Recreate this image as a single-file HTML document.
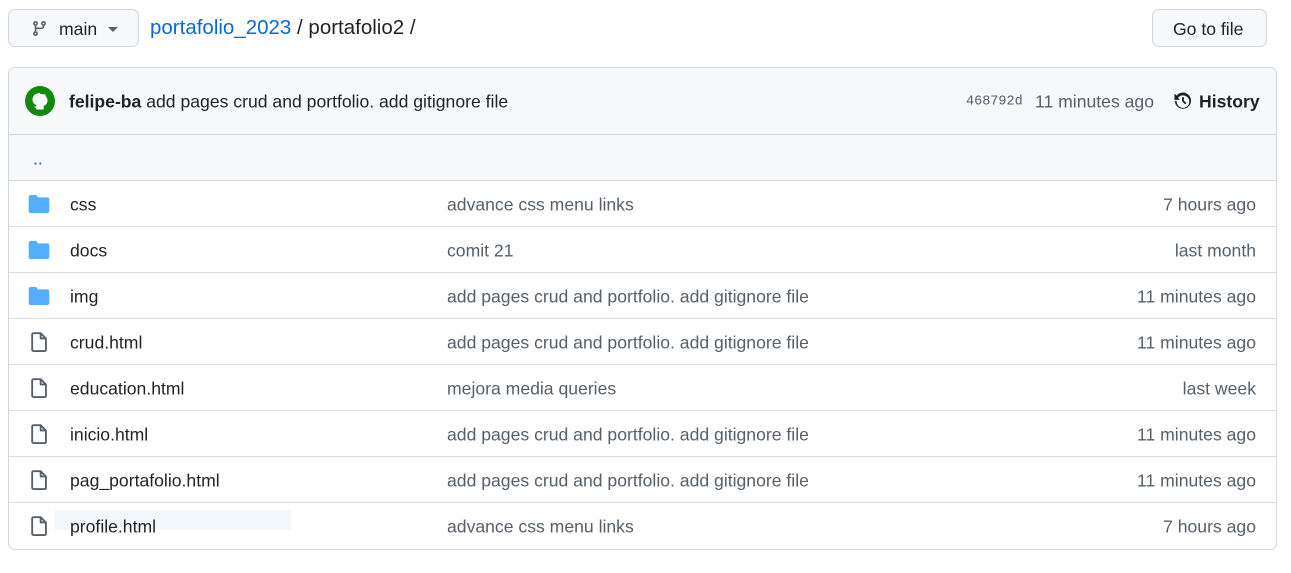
<!DOCTYPE html>
<html><head><meta charset="utf-8"><style>
*{box-sizing:border-box;margin:0;padding:0}
body{width:1291px;height:573px;background:#fff;font-family:"Liberation Sans",sans-serif;color:#1f2328;font-size:17.6px;position:relative;overflow:hidden}
.btn{position:absolute;background:#f6f8fa;border:1px solid #d0d7de;border-radius:7px}
.box{position:absolute;left:8px;top:67px;width:1269px;height:483px;border:1px solid #d0d7de;border-radius:7px;overflow:hidden}
.hdr{height:67px;background:#f6f8fa;border-bottom:1px solid #d0d7de;position:relative}
.up{height:46px;background:#f6f8fa;border-bottom:1px solid #d0d7de;position:relative;color:#0969da}
.row{height:46px;border-bottom:1px solid #d8dee4;position:relative}
.row:last-child{border-bottom:none}
.ab{position:absolute;top:50%;transform:translateY(-45%);white-space:nowrap}
.msg{left:438px;color:#57606a}
.tm{right:20px;color:#57606a}
.nm{left:61px}
.ic{left:19px;transform:translateY(-50%)}
</style></head><body>
<div class="btn" style="left:8px;top:9px;width:131px;height:38px">
<svg style="position:absolute;left:22px;top:10px" width="17" height="17" viewBox="0 0 16 16" fill="#57606a"><path d="M9.5 3.25a2.25 2.25 0 1 1 3 2.12V6A2.5 2.5 0 0 1 10 8.5H6a1 1 0 0 0-1 1v1.13a2.25 2.25 0 1 1-1.5 0V5.37a2.25 2.25 0 1 1 1.5 0v1.84c.31-.14.65-.21 1-.21h4a1 1 0 0 0 1-1v-.63A2.25 2.25 0 0 1 9.5 3.25Zm-6 0a.75.75 0 1 0 1.5 0 .75.75 0 0 0-1.5 0Zm8.25-.75a.75.75 0 1 0 0 1.5.75.75 0 0 0 0-1.5ZM4.25 12a.75.75 0 1 0 0 1.5.75.75 0 0 0 0-1.5Z"/></svg>
<span style="position:absolute;left:50px;top:9px;font-size:17.6px">main</span>
<svg style="position:absolute;left:99px;top:17px" width="10" height="6"><path d="M0 0h10L5 5z" fill="#57606a"/></svg>
</div>
<div style="position:absolute;left:150px;top:16px;font-size:20.5px;white-space:nowrap"><span style="color:#0969da">portafolio_2023</span> / portafolio2 /</div>
<div class="btn" style="left:1152px;top:9px;width:115px;height:38px"><span style="position:absolute;left:20px;top:9px;font-size:17.6px">Go to file</span></div>
<div class="box">
<div class="hdr">
<div class="ab" style="left:16px;width:30px;height:30px;border-radius:50%;background:#138a0d;transform:translateY(-50%)"><svg width="30" height="30" viewBox="0 0 30 30"><path d="M15 7c-4.5 0-7.5 3-7.5 6.5 0 3 1.8 4.8 3.8 5.6v1.4c-1.5.3-2.5-.3-3-1.3 1 1.8 2 2.6 3 2.6v1.7h7.4v-3.5c2-.8 3.8-2.6 3.8-5.6 0-3.5-3-6.5-7.5-6.5z" fill="#fff"/><path d="M10 8.5l1.3 2M20 8.5l-1.3 2" stroke="#fff" stroke-width="2"/></svg></div>
<div class="ab" style="left:60px"><b>felipe-ba</b> add pages crud and portfolio. add gitignore file</div>
<div class="ab" style="left:957px;font-family:'Liberation Mono',monospace;font-size:13.5px;color:#57606a">468792d</div>
<div class="ab" style="left:1026px;color:#57606a">11 minutes ago</div>
<svg class="ab" style="left:1164px;transform:translateY(-50%)" width="20" height="20" viewBox="0 0 16 16" fill="#1f2328"><path d="M1.64 2.39 2.9 3.65A6.5 6.5 0 1 1 1.5 8.5a.75.75 0 0 1 1.5 0 5 5 0 1 0 1.03-3.03l1.2 1.2A.25.25 0 0 1 5.05 7.1H1.4a.25.25 0 0 1-.25-.25V2.57a.25.25 0 0 1 .43-.18ZM8 4.75a.75.75 0 0 1 .75.75v2.19l1.53 1.53a.75.75 0 0 1-1.06 1.06L7.47 8.53A.75.75 0 0 1 7.25 8V5.5A.75.75 0 0 1 8 4.75Z"/></svg>
<div class="ab" style="left:1190px;font-weight:bold">History</div>
</div>
<div class="up"><span class="ab" style="left:24px">..</span></div>
<div class="row"><svg class="ab ic" width="22" height="18" viewBox="0 0 16 14"><path d="M0 1.5C0 .7.7 0 1.5 0h3.7c.5 0 .9.2 1.2.6l.9 1.2h7.2c.8 0 1.5.7 1.5 1.5v9.2c0 .8-.7 1.5-1.5 1.5h-13C.7 14 0 13.3 0 12.5z" fill="#54aeff"/></svg><span class="ab nm">css</span><span class="ab msg">advance css menu links</span><span class="ab tm">7 hours ago</span></div>
<div class="row"><svg class="ab ic" width="22" height="18" viewBox="0 0 16 14"><path d="M0 1.5C0 .7.7 0 1.5 0h3.7c.5 0 .9.2 1.2.6l.9 1.2h7.2c.8 0 1.5.7 1.5 1.5v9.2c0 .8-.7 1.5-1.5 1.5h-13C.7 14 0 13.3 0 12.5z" fill="#54aeff"/></svg><span class="ab nm">docs</span><span class="ab msg">comit 21</span><span class="ab tm">last month</span></div>
<div class="row"><svg class="ab ic" width="22" height="18" viewBox="0 0 16 14"><path d="M0 1.5C0 .7.7 0 1.5 0h3.7c.5 0 .9.2 1.2.6l.9 1.2h7.2c.8 0 1.5.7 1.5 1.5v9.2c0 .8-.7 1.5-1.5 1.5h-13C.7 14 0 13.3 0 12.5z" fill="#54aeff"/></svg><span class="ab nm">img</span><span class="ab msg">add pages crud and portfolio. add gitignore file</span><span class="ab tm">11 minutes ago</span></div>
<div class="row"><svg class="ab ic" width="22" height="22" viewBox="0 0 20 20"><path d="M5 2h6.5l4.8 4.8v10.4a1 1 0 0 1-1 1H5a1.2 1.2 0 0 1-1.2-1.2V3.2A1.2 1.2 0 0 1 5 2zM11.5 2v4.8h4.8" fill="none" stroke="#57606a" stroke-width="1.7" stroke-linejoin="round"/></svg><span class="ab nm">crud.html</span><span class="ab msg">add pages crud and portfolio. add gitignore file</span><span class="ab tm">11 minutes ago</span></div>
<div class="row"><svg class="ab ic" width="22" height="22" viewBox="0 0 20 20"><path d="M5 2h6.5l4.8 4.8v10.4a1 1 0 0 1-1 1H5a1.2 1.2 0 0 1-1.2-1.2V3.2A1.2 1.2 0 0 1 5 2zM11.5 2v4.8h4.8" fill="none" stroke="#57606a" stroke-width="1.7" stroke-linejoin="round"/></svg><span class="ab nm">education.html</span><span class="ab msg">mejora media queries</span><span class="ab tm">last week</span></div>
<div class="row"><svg class="ab ic" width="22" height="22" viewBox="0 0 20 20"><path d="M5 2h6.5l4.8 4.8v10.4a1 1 0 0 1-1 1H5a1.2 1.2 0 0 1-1.2-1.2V3.2A1.2 1.2 0 0 1 5 2zM11.5 2v4.8h4.8" fill="none" stroke="#57606a" stroke-width="1.7" stroke-linejoin="round"/></svg><span class="ab nm">inicio.html</span><span class="ab msg">add pages crud and portfolio. add gitignore file</span><span class="ab tm">11 minutes ago</span></div>
<div class="row"><svg class="ab ic" width="22" height="22" viewBox="0 0 20 20"><path d="M5 2h6.5l4.8 4.8v10.4a1 1 0 0 1-1 1H5a1.2 1.2 0 0 1-1.2-1.2V3.2A1.2 1.2 0 0 1 5 2zM11.5 2v4.8h4.8" fill="none" stroke="#57606a" stroke-width="1.7" stroke-linejoin="round"/></svg><span class="ab nm">pag_portafolio.html</span><span class="ab msg">add pages crud and portfolio. add gitignore file</span><span class="ab tm">11 minutes ago</span></div>
<div class="row"><div style="position:absolute;left:45px;top:7px;width:237px;height:20px;background:#f3f8fd"></div><svg class="ab ic" width="22" height="22" viewBox="0 0 20 20"><path d="M5 2h6.5l4.8 4.8v10.4a1 1 0 0 1-1 1H5a1.2 1.2 0 0 1-1.2-1.2V3.2A1.2 1.2 0 0 1 5 2zM11.5 2v4.8h4.8" fill="none" stroke="#57606a" stroke-width="1.7" stroke-linejoin="round"/></svg><span class="ab nm">profile.html</span><span class="ab msg">advance css menu links</span><span class="ab tm">7 hours ago</span></div>
</div>
</body></html>
